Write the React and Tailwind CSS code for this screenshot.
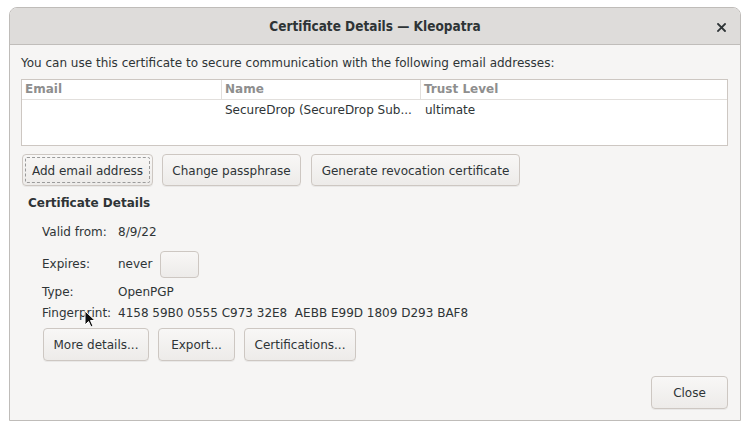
import React from "react";

const btn =
  "h-[32px] pt-[1px] rounded-[4px] border border-[#cdc7c2] bg-gradient-to-b from-[#f8f7f6] to-[#edebe9] text-[#2e3436] text-[12px] leading-none whitespace-nowrap flex items-center justify-center shadow-[0_1px_0_rgba(0,0,0,0.05)]";

export default function App() {
  return (
    <div className="w-[750px] h-[430px] bg-white relative" style={{ fontFamily: '"DejaVu Sans", sans-serif' }}>
      <div className="absolute left-[9px] top-[7px] w-[732px] h-[414px] border border-[#bfbcb9] rounded-t-[8px] bg-[#f6f5f4] flex flex-col overflow-hidden">
        {/* Title bar */}
        <div className="h-[37px] shrink-0 bg-[#dedcda] border-b border-[#c0bdba] flex items-center justify-center relative">
          <span className="text-[13.5px] font-bold text-[#2e3436] pt-[1px]" style={{ fontFamily: '"DejaVu Sans Condensed", "DejaVu Sans", sans-serif' }}>
            Certificate Details — Kleopatra
          </span>
          <svg className="absolute right-[14px] top-[15px]" width="9" height="9" viewBox="0 0 9 9">
            <path d="M1 1 L8 8 M8 1 L1 8" stroke="#2e3436" strokeWidth="1.8" strokeLinecap="square" />
          </svg>
        </div>

        {/* Body */}
        <div className="flex-1 flex flex-col pl-[11px] pr-[12px] pt-[11px] text-[12px] text-[#2e3436]">
          <div className="h-[15px] leading-[15px]">
            You can use this certificate to secure communication with the following email addresses:
          </div>

          {/* Table */}
          <div className="mt-[8px] w-[707px] h-[67px] bg-white border border-[#cdc7c2] flex flex-col">
            <div className="h-[20px] border-b border-[#e2dfdc] flex text-[#8e8e8e] font-bold leading-[19px]">
              <div className="w-[200px] px-[3px] border-r border-[#e2dfdc]">Email</div>
              <div className="w-[199px] px-[3px] border-r border-[#e2dfdc]">Name</div>
              <div className="flex-1 px-[3px]">Trust Level</div>
            </div>
            <div className="h-[20px] flex leading-[20px]">
              <div className="w-[200px] px-[4px]"></div>
              <div className="w-[199px] px-[3px]">SecureDrop (SecureDrop Sub...</div>
              <div className="flex-1 px-[4px]">ultimate</div>
            </div>
          </div>

          {/* Action buttons */}
          <div className="mt-[8px] flex gap-[9px] pl-[1px]">
            <div className={btn + " w-[131px] relative"}>
              <span className="absolute inset-[2px] border border-dashed border-[#9a9a9a] rounded-[2px]"></span>
              Add email address
            </div>
            <div className={btn + " w-[139px]"}>Change passphrase</div>
            <div className={btn + " w-[209px] ml-[1px]"}>Generate revocation certificate</div>
          </div>

          {/* Certificate details */}
          <div className="mt-[10px] pl-[7px] font-bold leading-[15px] h-[15px]">Certificate Details</div>
          <div className="pl-[21px] flex flex-col">
            <div className="mt-[14px] flex h-[15px] leading-[15px]">
              <span className="w-[76px]">Valid from:</span>
              <span>8/9/22</span>
            </div>
            <div className="mt-[10px] flex items-center h-[28px]">
              <span className="w-[76px]">Expires:</span>
              <span>never</span>
              <div className="ml-[8px] w-[39px] h-[27px] rounded-[4px] border border-[#cdc7c2] bg-gradient-to-b from-[#f8f7f6] to-[#edebe9]"></div>
            </div>
            <div className="mt-[7px] flex h-[15px] leading-[15px]">
              <span className="w-[76px]">Type:</span>
              <span>OpenPGP</span>
            </div>
            <div className="mt-[6px] flex h-[15px] leading-[15px]">
              <span className="w-[76px]">Fingerprint:</span>
              <span className="whitespace-pre">4158 59B0 0555 C973 32E8  AEBB E99D 1809 D293 BAF8</span>
            </div>
            <div className="mt-[7px] flex gap-[9px] pl-[1px]">
              <div className={btn + " w-[106px] h-[33px]"}>More details...</div>
              <div className={btn + " w-[77px] h-[33px]"}>Export...</div>
              <div className={btn + " w-[112px] h-[33px]"}>Certifications...</div>
            </div>
          </div>

          <div className="mt-[15px] flex justify-end">
            <div className={btn + " w-[77px] h-[33px]"}>Close</div>
          </div>
        </div>
      </div>

      {/* Mouse cursor */}
      <svg className="absolute left-[84px] top-[310px]" width="12" height="19" viewBox="0 0 12 19">
        <path d="M1 1 L1 15 L4.5 11.5 L7 17 L9 16 L6.5 10.5 L11 10.5 Z" fill="#111" stroke="#fff" strokeWidth="1" strokeLinejoin="round" />
      </svg>
    </div>
  );
}
